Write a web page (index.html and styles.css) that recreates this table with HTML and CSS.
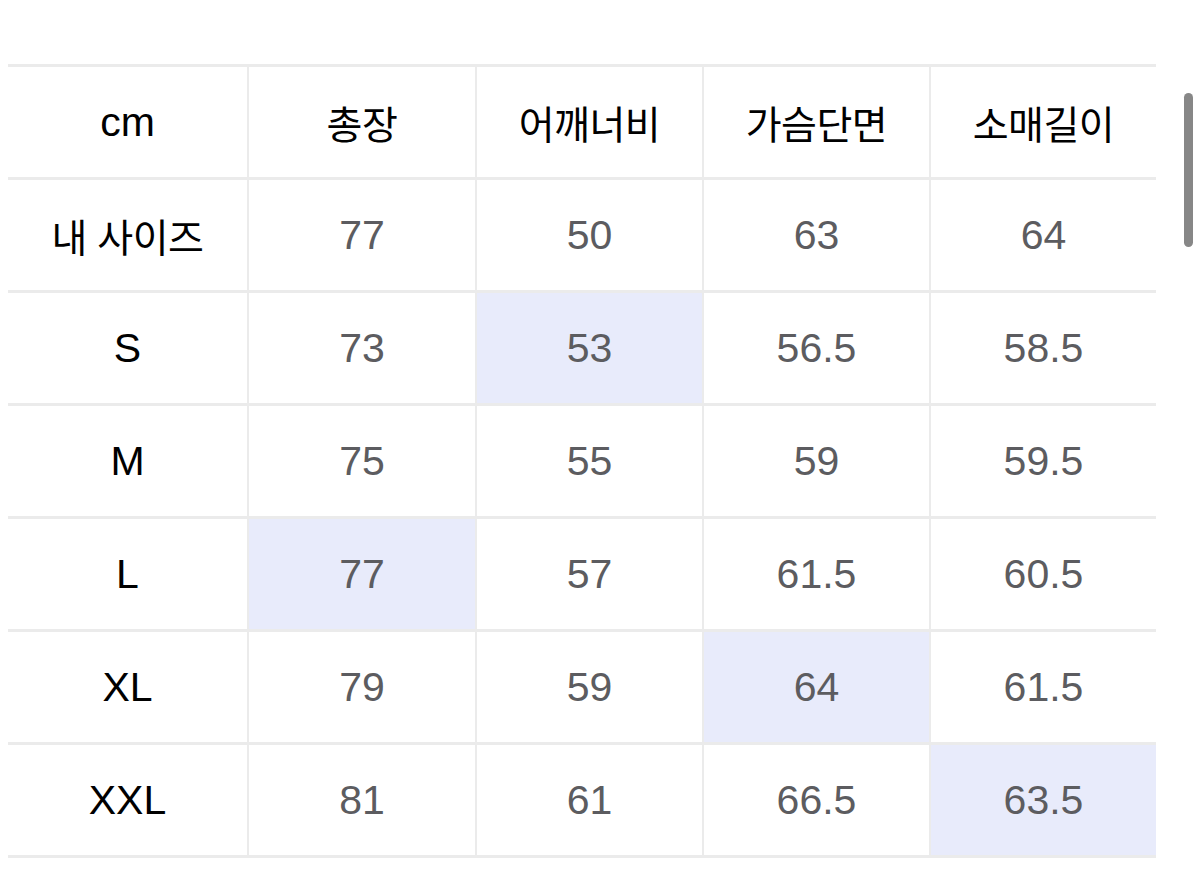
FILE: index.html
```html
<!DOCTYPE html>
<html lang="ko">
<head>
<meta charset="utf-8">
<title>사이즈표</title>
<link rel="stylesheet" href="styles.css">
</head>
<body>
<div class="page">
  <div class="size-table">
    <div class="cell head label">cm</div>
    <div class="cell head ko">총장</div>
    <div class="cell head ko">어깨너비</div>
    <div class="cell head ko">가슴단면</div>
    <div class="cell head ko">소매길이</div>

    <div class="cell label ko">내 사이즈</div>
    <div class="cell num">77</div>
    <div class="cell num">50</div>
    <div class="cell num">63</div>
    <div class="cell num">64</div>

    <div class="cell label">S</div>
    <div class="cell num">73</div>
    <div class="cell num hl">53</div>
    <div class="cell num">56.5</div>
    <div class="cell num">58.5</div>

    <div class="cell label">M</div>
    <div class="cell num">75</div>
    <div class="cell num">55</div>
    <div class="cell num">59</div>
    <div class="cell num">59.5</div>

    <div class="cell label">L</div>
    <div class="cell num hl">77</div>
    <div class="cell num">57</div>
    <div class="cell num">61.5</div>
    <div class="cell num">60.5</div>

    <div class="cell label">XL</div>
    <div class="cell num">79</div>
    <div class="cell num">59</div>
    <div class="cell num hl">64</div>
    <div class="cell num">61.5</div>

    <div class="cell label">XXL</div>
    <div class="cell num">81</div>
    <div class="cell num">61</div>
    <div class="cell num">66.5</div>
    <div class="cell num hl">63.5</div>
  </div>
  <div class="scrollbar"></div>
</div>
</body>
</html>
```

FILE: styles.css
```css
html, body {
  margin: 0;
  padding: 0;
  background: #ffffff;
}

.page {
  position: relative;
  width: 1200px;
  height: 887px;
  overflow: hidden;
  padding-top: 64px;
  padding-left: 8px;
  box-sizing: border-box;
}

.size-table {
  display: grid;
  grid-template-columns: 239px 226px 225px 225px 225px;
  grid-auto-rows: 110px;
  column-gap: 2px;
  row-gap: 3px;
  padding: 3px 0;
  width: 1148px;
  background: #ebebeb;
}

.cell {
  background: #ffffff;
  display: flex;
  align-items: center;
  justify-content: center;
  font-family: "Liberation Sans", "Noto Sans CJK KR", sans-serif;
  font-size: 41px;
  color: #000000;
}

.cell.ko {
  font-family: "Noto Sans CJK KR", sans-serif;
  font-size: 39px;
  font-weight: 400;
  letter-spacing: -0.5px;
}

.cell.num {
  color: #5c5c60;
}

.cell.hl {
  background: #e8ebfb;
}

.scrollbar {
  position: absolute;
  left: 1184px;
  top: 93px;
  width: 9px;
  height: 154px;
  border-radius: 5px;
  background: #878787;
}
```
